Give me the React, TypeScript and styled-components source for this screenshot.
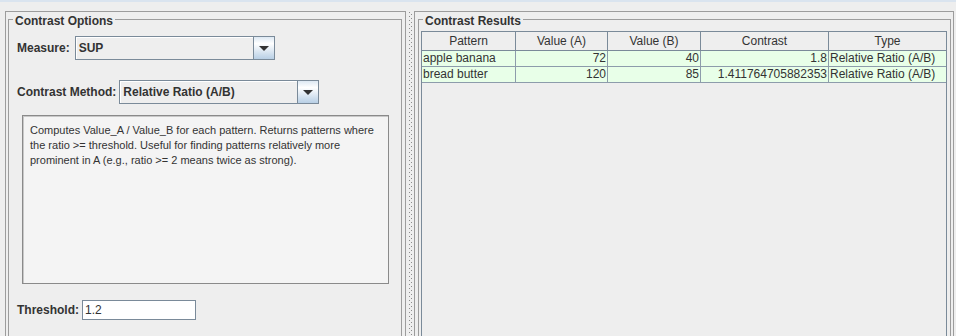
import React from "react";
import styled, { createGlobalStyle } from "styled-components";

const GlobalStyle = createGlobalStyle`
  html, body {
    margin: 0;
    padding: 0;
    background: #eeeeee;
  }
  body {
    font-family: "Liberation Sans", Arial, sans-serif;
    font-size: 12px;
    color: #333333;
  }
`;

const Frame = styled.div`
  width: 956px;
  height: 336px;
  box-sizing: border-box;
  overflow: hidden;
  border-top: 2px solid #dae4ef;
  padding: 9px 0 0 5px;
  display: flex;
  align-items: flex-start;
`;

const Pane = styled.div<{ $width: number; $padLeft: number; $padRight: number }>`
  flex: none;
  width: ${(p) => p.$width}px;
  height: 340px;
  box-sizing: border-box;
  border: 1px solid #9c9c9c;
  padding: 0 ${(p) => p.$padRight}px 0 ${(p) => p.$padLeft}px;
`;

const Divider = styled.div`
  flex: none;
  width: 8px;
  height: 340px;
  background-image: conic-gradient(at 1px 1px, transparent 75%, #8c8c8c 0),
    conic-gradient(at 1px 1px, transparent 75%, #8c8c8c 0);
  background-size: 4px 4px, 4px 4px;
  background-position: 3px 1px, 5px 3px;
  background-repeat: repeat-y;
`;

const Group = styled.fieldset`
  margin: 0;
  padding: 0;
  min-width: 0;
  height: 100%;
  box-sizing: border-box;
  border: 1px solid #9c9c9c;
`;

const Legend = styled.legend`
  margin-left: 4px;
  padding: 3px 2px 0;
  font-weight: bold;
  font-size: 12px;
  line-height: 12px;
  color: #333333;
`;

const Options = styled.div`
  display: flex;
  flex-direction: column;
  align-items: flex-start;
  padding: 9px 0 0 8px;
`;

const Row = styled.div<{ $gap: number; $top?: number }>`
  display: flex;
  align-items: center;
  gap: ${(p) => p.$gap}px;
  margin-top: ${(p) => p.$top ?? 0}px;
`;

const Label = styled.span`
  font-weight: bold;
  font-size: 12px;
  white-space: nowrap;
`;

const Combo = styled.div`
  display: flex;
  width: 200px;
  height: 24px;
  box-sizing: border-box;
  border: 1px solid #7a8a99;
`;

const ComboValue = styled.div`
  flex: 1;
  display: flex;
  align-items: center;
  padding-left: 3px;
  font-weight: bold;
  font-size: 12px;
  background: #eeeeee;
  box-shadow: inset 1px 1px 0 #ffffff;
`;

const ArrowButton = styled.div`
  width: 20px;
  border-left: 1px solid #7a8a99;
  display: flex;
  align-items: center;
  justify-content: center;
  background: linear-gradient(#dde8f3 0%, #ffffff 30%, #b8cfe5 100%);
`;

const Description = styled.div`
  margin: 11px 0 0 5px;
  width: 367px;
  height: 169px;
  box-sizing: border-box;
  border: 1px solid #8a8a8a;
  box-shadow: inset 1px 1px 0 #c8c8c8;
  background: #f4f4f4;
  padding: 7px 8px 0 7px;
  font-size: 11px;
  line-height: 15px;
  color: #333333;
`;

const Field = styled.div`
  width: 114px;
  height: 20px;
  box-sizing: border-box;
  border: 1px solid #7a8a99;
  background: #ffffff;
  padding: 0 2px;
  line-height: 18px;
  font-size: 12px;
`;

const Results = styled.div`
  padding: 4px 0 0 2px;
`;

const ScrollBox = styled.div`
  width: 526px;
  height: 320px;
  box-sizing: border-box;
  border: 1px solid #7a8a99;
  background: #eeeeee;
`;

const Grid = styled.div`
  display: grid;
  grid-template-columns: 94px 92px 93px 128px 117px;
`;

const HeadCell = styled.div<{ $last?: boolean }>`
  height: 19px;
  box-sizing: border-box;
  border-bottom: 1px solid #7a8a99;
  border-right: ${(p) => (p.$last ? "none" : "1px solid #7a8a99")};
  line-height: 18px;
  text-align: center;
  background: #eeeeee;
  white-space: nowrap;
`;

const Cell = styled.div<{ $align: "left" | "right"; $last?: boolean }>`
  height: 16px;
  box-sizing: border-box;
  border-bottom: 1px solid #8d9cab;
  border-right: ${(p) => (p.$last ? "none" : "1px solid #8d9cab")};
  padding: 0 1px;
  line-height: 15px;
  text-align: ${(p) => p.$align};
  background: #e8ffe8;
  white-space: nowrap;
  overflow: hidden;
`;

const Arrow = () => (
  <svg width="10" height="5" viewBox="0 0 10 5">
    <polygon points="0,0 10,0 5,5" fill="#333333" />
  </svg>
);

const ComboBox = ({ value }: { value: string }) => (
  <Combo>
    <ComboValue>{value}</ComboValue>
    <ArrowButton>
      <Arrow />
    </ArrowButton>
  </Combo>
);

const columns = ["Pattern", "Value (A)", "Value (B)", "Contrast", "Type"];

const rows = [
  ["apple banana", "72", "40", "1.8", "Relative Ratio (A/B)"],
  ["bread butter", "120", "85", "1.411764705882353", "Relative Ratio (A/B)"],
];

const App = () => {
  return (
    <>
      <GlobalStyle />
      <Frame>
        <Pane $width={401} $padLeft={2} $padRight={3}>
          <Group>
            <Legend>Contrast Options</Legend>
            <Options>
              <Row $gap={5}>
                <Label>Measure:</Label>
                <ComboBox value="SUP" />
              </Row>
              <Row $gap={3} $top={20}>
                <Label>Contrast Method:</Label>
                <ComboBox value="Relative Ratio (A/B)" />
              </Row>
              <Description>
                Computes Value_A / Value_B for each pattern. Returns patterns
                where the ratio &gt;= threshold. Useful for finding patterns
                relatively more prominent in A (e.g., ratio &gt;= 2 means twice
                as strong).
              </Description>
              <Row $gap={3} $top={16}>
                <Label>Threshold:</Label>
                <Field>1.2</Field>
              </Row>
            </Options>
          </Group>
        </Pane>
        <Divider />
        <Pane $width={540} $padLeft={3} $padRight={2}>
          <Group>
            <Legend>Contrast Results</Legend>
            <Results>
              <ScrollBox>
                <Grid>
                  {columns.map((c, i) => (
                    <HeadCell key={c} $last={i === columns.length - 1}>
                      {c}
                    </HeadCell>
                  ))}
                  {rows.map((r) =>
                    r.map((v, i) => (
                      <Cell
                        key={r[0] + i}
                        $align={i === 0 || i === 4 ? "left" : "right"}
                        $last={i === 4}
                      >
                        {v}
                      </Cell>
                    ))
                  )}
                </Grid>
              </ScrollBox>
            </Results>
          </Group>
        </Pane>
      </Frame>
    </>
  );
};

export default App;
